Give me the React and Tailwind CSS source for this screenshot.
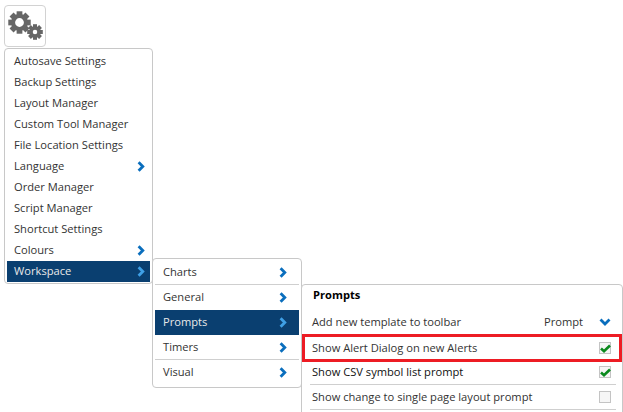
const mainItems = [
  { label: "Autosave Settings" },
  { label: "Backup Settings" },
  { label: "Layout Manager" },
  { label: "Custom Tool Manager" },
  { label: "File Location Settings" },
  { label: "Language", sub: true },
  { label: "Order Manager" },
  { label: "Script Manager" },
  { label: "Shortcut Settings" },
  { label: "Colours", sub: true },
  { label: "Workspace", sub: true, active: true },
];

const workspaceItems = ["Charts", "General", "Prompts", "Timers", "Visual"];

function Chevron({ active }) {
  return (
    <svg width="8" height="11" viewBox="0 0 8 11" className={active ? "text-[#3fa0e6]" : "text-[#0a6ebd]"}>
      <path d="M1.6 1.2 L5.8 5.5 L1.6 9.8" fill="none" stroke="currentColor" strokeWidth="2.8" />
    </svg>
  );
}

function Gear({ size, hole, className }) {
  const teeth = [0, 45, 90, 135, 180, 225, 270, 315];
  const r = (hole + 8.8) / 2;
  return (
    <svg width={size} height={size} viewBox="0 0 24 24" className={className}>
      {teeth.map((a) => (
        <rect key={a} x="9" y="0.3" width="6" height="5" fill="#666" transform={`rotate(${a} 12 12)`} />
      ))}
      <circle cx="12" cy="12" r={r} fill="none" stroke="#666" strokeWidth={8.8 - hole} />
    </svg>
  );
}

function Checkbox({ checked }) {
  return (
    <span className="w-3 h-3 border border-[#c4c4c4] bg-[#f6f6f6] flex items-center justify-center">
      {checked && (
        <svg width="11" height="9" viewBox="0 0 11 9" className="shrink-0">
          <path d="M1 4.5 L4 7.2 L10 1.5" fill="none" stroke="#0b8a1e" strokeWidth="2.6" />
        </svg>
      )}
    </span>
  );
}

export default function App() {
  return (
    <div className="relative w-[623px] h-[412px] overflow-hidden bg-white text-[11.15px] text-[#333] font-['Open_Sans',sans-serif]">
      <div className="absolute left-1 top-[5px] w-[42px] h-[42px] rounded-sm border border-[#d2d2d2]">
        <Gear size={23} hole={4.6} className="absolute left-[3px] top-[5px]" />
        <Gear size={16} hole={3.4} className="absolute left-[22px] top-[18px]" />
      </div>

      <div className="absolute left-1 top-[48px] w-[149px] h-[236px] rounded-sm border border-[#c8c8c8] bg-white p-[2px]">
        {mainItems.map((item) => (
          <div
            key={item.label}
            className={`h-[21px] pl-[7px] pr-[5px] flex items-center justify-between ${item.active ? "bg-[#0a3f70] text-[#e8e8e8]" : ""}`}
          >
            <span>{item.label}</span>
            {item.sub && <Chevron active={item.active} />}
          </div>
        ))}
      </div>

      <div className="absolute left-[152px] top-[258px] w-[150px] h-[130px] rounded-sm border border-[#c8c8c8] bg-white px-[2px] pt-[1px]">
        {workspaceItems.map((label, i) => (
          <div
            key={label}
            className={`h-[25px] flex items-center justify-between pl-2 pr-3 ${label === "Prompts" ? "bg-[#0a3f70] text-[#e8e8e8]" : ""} ${i < 4 && label !== "General" && label !== "Prompts" ? "border-b border-[#cfcfcf]" : ""}`}
          >
            <span>{label}</span>
            <Chevron active={label === "Prompts"} />
          </div>
        ))}
      </div>

      <div className="absolute left-[301px] top-[284px] w-[322px] h-[140px] rounded-sm border border-[#c8c8c8] bg-white pl-2 pr-[6px]">
        <div className="h-[21px] pl-[3px] flex items-center font-bold text-black">Prompts</div>
        <div className="h-[29px] pl-[2px] pr-[5px] pt-[3px] flex items-center justify-between">
          <span>Add new template to toolbar</span>
          <span className="flex items-center gap-4">
            <span>Prompt</span>
            <svg width="12" height="8" viewBox="0 0 12 8">
              <path d="M1.5 1.5 L6 6 L10.5 1.5" fill="none" stroke="#0a6ebd" strokeWidth="2.8" />
            </svg>
          </span>
        </div>
        <div className="h-[25px] pl-[2px] pr-[5px] pt-[1px] flex items-center justify-between">
          <span>Show Alert Dialog on new Alerts</span>
          <Checkbox checked />
        </div>
        <div className="h-[25px] pl-[2px] pr-[5px] flex items-center justify-between border-b border-[#cfcfcf] text-[#111]">
          <span>Show CSV symbol list prompt</span>
          <Checkbox checked />
        </div>
        <div className="h-[25px] pl-[2px] pr-[5px] flex items-center justify-between border-b border-[#cfcfcf]">
          <span>Show change to single page layout prompt</span>
          <Checkbox />
        </div>
      </div>

      <div className="absolute left-[302px] top-[334px] w-[320px] h-[28px] border-[3px] border-[#ed1c24]" />
    </div>
  );
}
